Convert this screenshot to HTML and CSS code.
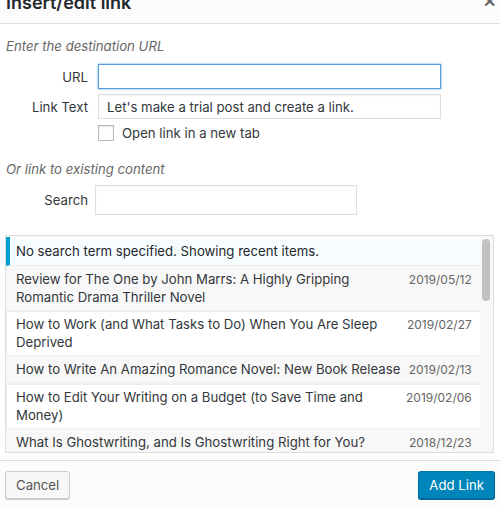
FILE: index.html
```html
<!DOCTYPE html>
<html>

<head>
    <title>Insert/edit link</title>
    <link rel="stylesheet" href="styles.css">
</head>

<body>
    <div class="dialog">
        <div class="dialog-head">
            <h1>Insert/edit link</h1>
            <span class="close">&#x2715;</span>
        </div>

        <div class="dialog-body">
            <p class="hint">Enter the destination URL</p>
            <div class="field first">
                <label>URL</label>
                <input class="text-input url focus" type="text">
            </div>
            <div class="field">
                <label>Link Text</label>
                <input class="text-input url" type="text" value="Let's make a trial post and create a link.">
            </div>
            <div class="field check-row">
                <span class="checkbox"></span>
                <span>Open link in a new tab</span>
            </div>

            <p class="hint second">Or link to existing content</p>
            <div class="field search-row">
                <label>Search</label>
                <input class="text-input search" type="text">
            </div>

            <div class="results">
                <div class="list">
                    <div class="notice">No search term specified. Showing recent items.</div>
                    <ul id="recent"></ul>
                </div>
                <div class="scrollbar"><span class="thumb"></span></div>
            </div>
        </div>

        <div class="dialog-foot">
            <button class="btn">Cancel</button>
            <button class="btn primary">Add Link</button>
        </div>
    </div>

    <script>
        const posts = [
            ["Review for The One by John Marrs: A Highly Gripping Romantic Drama Thriller Novel", "2019/05/12"],
            ["How to Work (and What Tasks to Do) When You Are Sleep Deprived", "2019/02/27"],
            ["How to Write An Amazing Romance Novel: New Book Release", "2019/02/13"],
            ["How to Edit Your Writing on a Budget (to Save Time and Money)", "2019/02/06"],
            ["What Is Ghostwriting, and Is Ghostwriting Right for You?", "2018/12/23"]
        ];

        let list = document.getElementById("recent");
        posts.forEach((post, i) => {
            let li = document.createElement("li");
            if (i % 2 == 1) li.className = "alternate";
            li.innerHTML = `<span class="item-title">${post[0]}</span><span class="item-date">${post[1]}</span>`;
            list.appendChild(li);
        });
    </script>
</body>

</html>
```

FILE: styles.css
```css
body {
    margin: 0;
    padding: 0;
    font-family: 'Inter', 'Liberation Sans', sans-serif;
    font-size: 13.2px;
    color: #32373c;
    background-color: #fff;
}

.dialog {
    width: 500px;
    height: 508px;
    display: flex;
    flex-direction: column;
    overflow: hidden;
}

.dialog-head {
    height: 23px;
    background-color: #fcfcfc;
    border-bottom: 1px solid #ddd;
    display: flex;
    justify-content: space-between;
    overflow: hidden;
    flex-shrink: 0;
}

.dialog-head h1 {
    margin: -11px 0 0 6px;
    font-size: 18px;
    line-height: 28px;
    font-weight: 600;
    color: #23282d;
}

.close {
    margin: -9px 4px 0 0;
    font-size: 16px;
    line-height: 20px;
    font-weight: bold;
    color: #666;
}

.dialog-body {
    flex: 1;
    min-height: 0;
    padding: 0 6px 0 5px;
}

.hint {
    margin: 13px 0 0 1px;
    font-style: italic;
    color: #666;
    line-height: 18px;
}

.hint.second {
    margin-top: 18px;
}

.field {
    display: flex;
    align-items: center;
    margin-top: 5px;
}

.field.first {
    margin-top: 9px;
}

.field label {
    width: 83px;
    text-align: right;
    margin-right: 10px;
    color: #32373c;
}

.text-input {
    box-sizing: border-box;
    height: 25px;
    margin: 0;
    padding: 2px 8px;
    border: 1px solid #ddd;
    font-family: inherit;
    font-size: 13.2px;
    color: #32373c;
    background-color: #fff;
    box-shadow: inset 0 1px 2px rgba(0, 0, 0, 0.04);
}

.text-input.url {
    width: 343px;
}

.text-input.focus {
    border-color: #5b9dd9;
    box-shadow: 0 0 2px rgba(30, 140, 190, 0.8);
}

.check-row {
    padding-left: 93px;
    height: 18px;
    margin-top: 5px;
}

.checkbox {
    box-sizing: border-box;
    width: 16px;
    height: 16px;
    border: 1px solid #b4b9be;
    background-color: #fff;
    margin-right: 8px;
    box-shadow: inset 0 1px 2px rgba(0, 0, 0, 0.1);
}

.field.search-row {
    margin-top: 7px;
}

.search-row label {
    margin-right: 7px;
}

.text-input.search {
    width: 262px;
    height: 30px;
}

.results {
    margin-top: 20px;
    height: 216px;
    border: 1px solid #ddd;
    background-color: #f8f8f8;
    display: flex;
    overflow: hidden;
}

.list {
    flex: 1;
    padding-top: 1px;
}

.notice {
    height: 28px;
    line-height: 28px;
    padding-left: 6px;
    border-left: 4px solid #00a0d2;
    background-color: #f7fcfe;
    border-bottom: 1px solid #eaeaea;
    color: #23282d;
}

ul {
    list-style: none;
    margin: 0;
    padding: 0;
}

li {
    display: flex;
    justify-content: space-between;
    padding: 4px 8px 4px 10px;
    line-height: 18px;
    border-bottom: 1px solid #f1f1f1;
    color: #32373c;
}

/* white rows get a faint frame drawn inside, so row heights stay even */
li.alternate {
    background-color: #fff;
    box-shadow: inset 1px 1px 0 #ececec;
}

.item-title {
    width: 390px;
}

.item-date {
    font-size: 12px;
    color: #666;
    white-space: nowrap;
    padding-top: 1px;
}

.scrollbar {
    width: 14px;
    padding-top: 3px;
}

.thumb {
    display: block;
    width: 8px;
    height: 62px;
    margin-left: 2px;
    border-radius: 4px;
    background-color: #c1c1c1;
}

.dialog-foot {
    height: 47px;
    flex-shrink: 0;
    background-color: #fcfcfc;
    border-top: 1px solid #ddd;
    display: flex;
    justify-content: space-between;
    align-items: center;
    padding: 0 5px;
}

.btn {
    height: 28px;
    padding: 0 10px;
    font-family: inherit;
    font-size: 13.2px;
    line-height: 26px;
    color: #555;
    background-color: #f7f7f7;
    border: 1px solid #ccc;
    border-radius: 3px;
    box-shadow: 0 1px 0 #ccc;
}

.btn.primary {
    color: #fff;
    background-color: #0085ba;
    border-color: #0073aa #006799 #006799;
    box-shadow: 0 1px 0 #006799;
}
```
